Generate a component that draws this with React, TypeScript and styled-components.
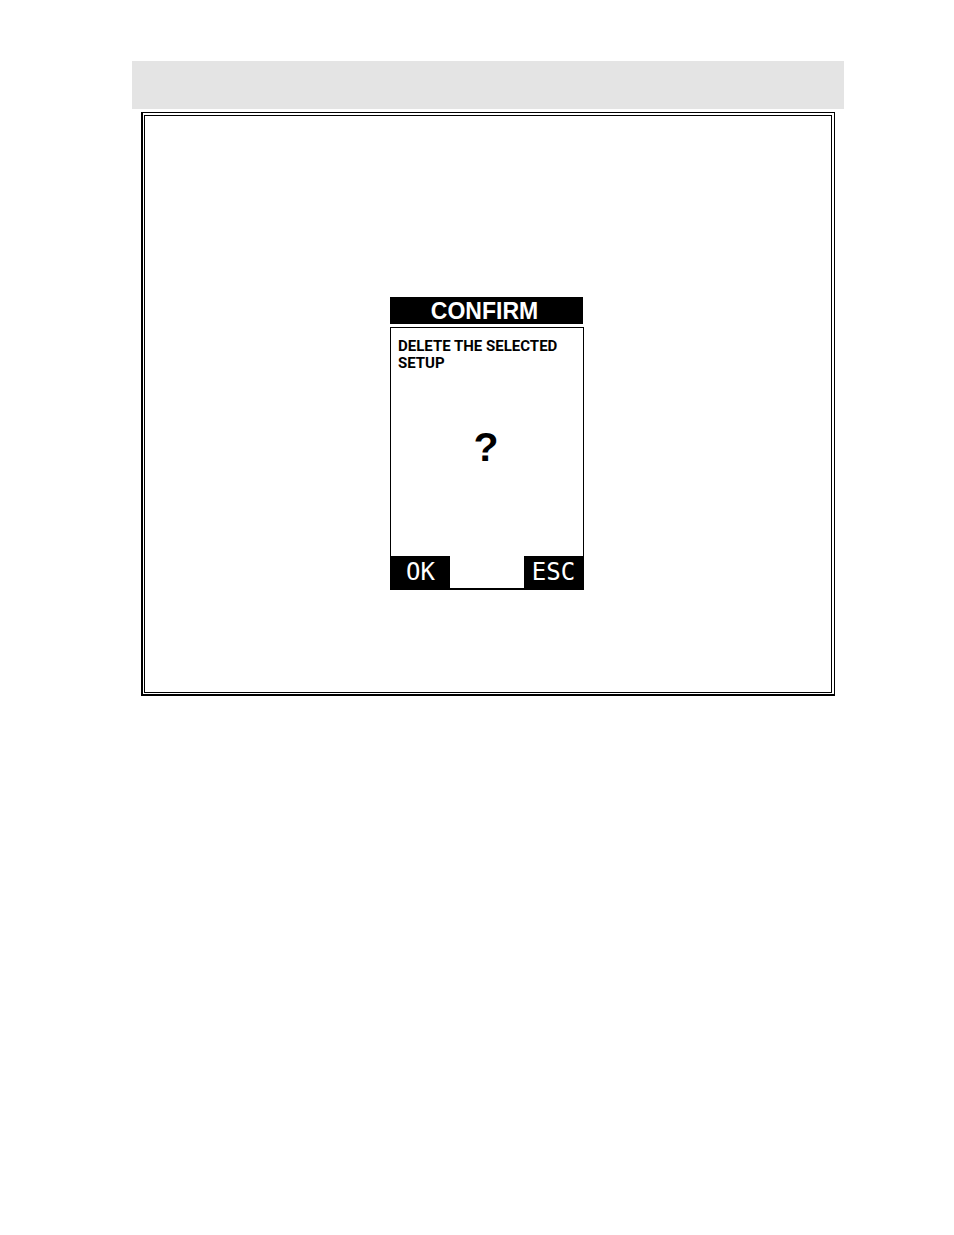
import React from "react";
import styled, { createGlobalStyle } from "styled-components";

const GlobalStyle = createGlobalStyle`
  *, *::before, *::after { box-sizing: border-box; }
  body {
    margin: 0;
    background: #fff;
    color: #000;
    font-family: "Liberation Sans", Arial, sans-serif;
  }
`;

const Page = styled.div`
  padding: 61px 110px 64px 132px;
`;

const Banner = styled.header`
  height: 48px;
  background: #e4e4e4;
`;

const Frame = styled.main`
  margin: 3px 9px 0;
  border: solid #000;
  border-width: 1px 1px 2px 2px;
  padding: 2px 2px 1px 1px;
`;

const Panel = styled.div`
  display: flex;
  justify-content: center;
  border: 1px solid #000;
  padding: 181px 2px 102px 0;
`;

const Dialog = styled.section`
  display: flex;
  flex-direction: column;
  gap: 3px;
  width: 194px;
`;

const Title = styled.h1`
  margin: 0 1px 0 0;
  padding: 2px 4px 0 0;
  background: #000;
  color: #fff;
  font-size: 23px;
  line-height: 25px;
  text-align: center;
`;

const Body = styled.div`
  display: flex;
  flex-direction: column;
  border: solid #000;
  border-width: 1px 1px 2px;
`;

const Message = styled.p`
  margin: 0;
  padding: 10px 7px 0;
  font-family: Roboto, "Liberation Sans", sans-serif;
  font-size: 15px;
  font-weight: 700;
  line-height: 17px;
`;

const Mark = styled.div`
  padding: 52px 2px 0 0;
  height: 184px;
  font-size: 41px;
  font-weight: 700;
  line-height: 46px;
  text-align: center;
`;

const Actions = styled.div`
  display: flex;
  justify-content: space-between;
  margin: 0 0 -2px;
`;

const SoftKey = styled.button`
  width: 59px;
  height: 34px;
  padding: 0 0 2px;
  border: 0;
  border-radius: 0;
  background: #000;
  color: #fff;
  font-family: "DejaVu Sans Mono", monospace;
  font-size: 24px;
  line-height: 32px;
  text-align: center;
`;

export default function App() {
  return (
    <>
      <GlobalStyle />
      <Page>
        <Banner />
        <Frame>
          <Panel>
            <Dialog role="dialog" aria-labelledby="dialog-title" aria-describedby="dialog-message">
              <Title id="dialog-title">CONFIRM</Title>
              <Body>
                <Message id="dialog-message">DELETE THE SELECTED SETUP</Message>
                <Mark>?</Mark>
                <Actions>
                  <SoftKey type="button">OK</SoftKey>
                  <SoftKey type="button">ESC</SoftKey>
                </Actions>
              </Body>
            </Dialog>
          </Panel>
        </Frame>
      </Page>
    </>
  );
}
